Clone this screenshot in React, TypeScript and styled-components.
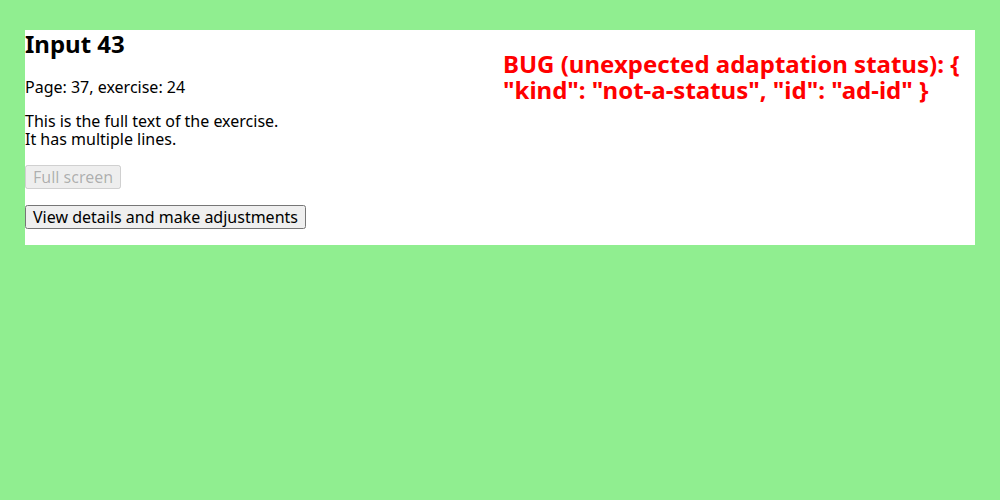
import React from 'react';
import styled, { createGlobalStyle } from 'styled-components';

const GlobalStyle = createGlobalStyle`
  html, body {
    margin: 0;
    padding: 0;
    background: lightgreen;
    font-family: "Noto Sans", sans-serif;
    font-size: 16px;
    line-height: 18px;
  }
`;

const Page = styled.div`
  padding: 30px 25px;
`;

const Panel = styled.div`
  background: white;
  display: grid;
  grid-template-columns: 1fr 1fr;
`;

const Column = styled.div``;

const Title = styled.h2`
  margin: 0 0 20px;
  font-size: 24px;
  line-height: 28px;
`;

const Text = styled.p`
  margin: 16px 0;
`;

const Actions = styled.div`
  display: flex;
  flex-direction: column;
  align-items: flex-start;
  gap: 16px;
  margin: 17px 0 16px;
`;

const Button = styled.button`
  font: inherit;
  line-height: 18px;
`;

const BugText = styled.p`
  margin: 21px 0 0 3px;
  color: red;
  font-weight: bold;
  font-size: 24px;
  line-height: 1.1;
`;

const App = () => {
  return (
    <>
      <GlobalStyle />
      <Page>
        <Panel>
          <Column>
            <Title>Input 43</Title>
            <Text>Page: 37, exercise: 24</Text>
            <Text>
              This is the full text of the exercise.
              <br />
              It has multiple lines.
            </Text>
            <Actions>
              <Button disabled>Full screen</Button>
              <Button>View details and make adjustments</Button>
            </Actions>
          </Column>
          <Column>
            <BugText>
              BUG (unexpected adaptation status): {'{'} "kind": "not-a-status", "id": "ad-id" {'}'}
            </BugText>
          </Column>
        </Panel>
      </Page>
    </>
  );
};

export default App;
